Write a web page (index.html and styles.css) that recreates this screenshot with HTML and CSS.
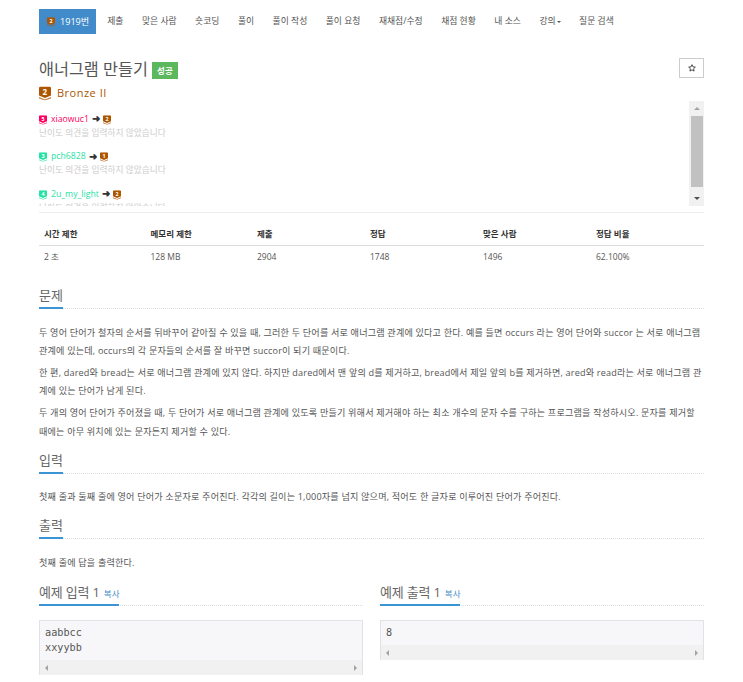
FILE: index.html
```html
<!DOCTYPE html>
<html>

<head>
  <meta charset="utf-8" />
  <title>애너그램 만들기</title>
  <link rel="stylesheet" href="styles.css">
</head>

<body>
  <svg class="defs" width="0" height="0">
    <symbol id="tier" viewBox="0 0 12 14">
      <path d="M1.5 0h9A1.5 1.5 0 0 1 12 1.5V9l-6 2.5L0 9V1.5A1.5 1.5 0 0 1 1.5 0z" fill="currentColor" />
      <path d="M0 10.5l6 2.5 6-2.5V12l-6 2-6-2z" fill="currentColor" opacity=".75" />
    </symbol>
  </svg>

  <div class="wrapper">
    <ul class="menu">
      <li class="active">
        <svg class="tier bronze" viewBox="0 0 12 14"><use href="#tier" /><text x="6" y="8.5">2</text></svg>1919번
      </li>
      <li>제출</li>
      <li>맞은 사람</li>
      <li>숏코딩</li>
      <li>풀이</li>
      <li>풀이 작성</li>
      <li>풀이 요청</li>
      <li>재채점/수정</li>
      <li>채점 현황</li>
      <li>내 소스</li>
      <li>강의<i class="caret"></i></li>
      <li>질문 검색</li>
    </ul>

    <div class="title-row">
      <div>
        <h1>애너그램 만들기 <span class="label">성공</span></h1>
        <div class="rank">
          <svg class="rank-icon bronze" viewBox="0 0 12 14"><use href="#tier" /><text x="6" y="8.5">2</text></svg>Bronze II
        </div>
      </div>
      <button class="star">
        <svg viewBox="0 0 12 12" width="8" height="8"><path d="M6 1l1.5 3.3 3.5.4-2.6 2.4.7 3.5L6 8.8l-3.1 1.8.7-3.500L1 4.700l3.500-.4z" fill="none" stroke="#333" stroke-width="1.300" /></svg>
      </button>
    </div>

    <div class="opinions">
      <div class="opinion-list">
        <div class="opinion">
          <div class="who">
            <svg class="tier ruby" viewBox="0 0 12 14"><use href="#tier" /><text x="6" y="8.5">5</text></svg><span class="ruby">xiaowuc1</span>
            <b class="arrow">➜</b>
            <svg class="tier bronze" viewBox="0 0 12 14"><use href="#tier" /><text x="6" y="8.5">2</text></svg>
          </div>
          <div class="note">난이도 의견을 입력하지 않았습니다</div>
        </div>
        <div class="opinion">
          <div class="who">
            <svg class="tier mint" viewBox="0 0 12 14"><use href="#tier" /><text x="6" y="8.5">3</text></svg><span class="mint">pch6828</span>
            <b class="arrow">➜</b>
            <svg class="tier bronze" viewBox="0 0 12 14"><use href="#tier" /><text x="6" y="8.5">1</text></svg>
          </div>
          <div class="note">난이도 의견을 입력하지 않았습니다</div>
        </div>
        <div class="opinion">
          <div class="who">
            <svg class="tier mint" viewBox="0 0 12 14"><use href="#tier" /><text x="6" y="8.5">4</text></svg><span class="mint">2u_my_light</span>
            <b class="arrow">➜</b>
            <svg class="tier bronze" viewBox="0 0 12 14"><use href="#tier" /><text x="6" y="8.5">2</text></svg>
          </div>
          <div class="note">난이도 의견을 입력하지 않았습니다</div>
        </div>
      </div>
      <div class="vbar">
        <span class="up"></span>
        <span class="thumb"></span>
        <span class="down"></span>
      </div>
    </div>

    <table class="info">
      <thead>
        <tr>
          <th class="c1">시간 제한</th>
          <th class="c1">메모리 제한</th>
          <th class="c2">제출</th>
          <th class="c2">정답</th>
          <th class="c2">맞은 사람</th>
          <th>정답 비율</th>
        </tr>
      </thead>
      <tbody>
        <tr>
          <td>2 초</td>
          <td>128 MB</td>
          <td>2904</td>
          <td>1748</td>
          <td>1496</td>
          <td>62.100%</td>
        </tr>
      </tbody>
    </table>

    <div class="headline"><h2>문제</h2></div>
    <div class="text">
      <p>두 영어 단어가 철자의 순서를 뒤바꾸어 같아질 수 있을 때, 그러한 두 단어를 서로 애너그램 관계에 있다고 한다. 예를 들면 occurs 라는 영어 단어와 succor 는 서로 애너그램 관계에 있는데, occurs의 각 문자들의 순서를 잘 바꾸면 succor이 되기 때문이다.</p>
      <p>한 편, dared와 bread는 서로 애너그램 관계에 있지 않다. 하지만 dared에서 맨 앞의 d를 제거하고, bread에서 제일 앞의 b를 제거하면, ared와 read라는 서로 애너그램 관계에 있는 단어가 남게 된다.</p>
      <p>두 개의 영어 단어가 주어졌을 때, 두 단어가 서로 애너그램 관계에 있도록 만들기 위해서 제거해야 하는 최소 개수의 문자 수를 구하는 프로그램을 작성하시오. 문자를 제거할 때에는 아무 위치에 있는 문자든지 제거할 수 있다.</p>
    </div>

    <div class="headline"><h2>입력</h2></div>
    <div class="text">
      <p>첫째 줄과 둘째 줄에 영어 단어가 소문자로 주어진다. 각각의 길이는 1,000자를 넘지 않으며, 적어도 한 글자로 이루어진 단어가 주어진다.</p>
    </div>

    <div class="headline"><h2>출력</h2></div>
    <div class="text">
      <p>첫째 줄에 답을 출력한다.</p>
    </div>

    <div class="samples">
      <div>
        <div class="headline"><h2>예제 입력 1 <a class="copy">복사</a></h2></div>
        <div class="sample">
          <pre>aabbcc
xxyybb</pre>
          <div class="hbar"><span class="left"></span><span class="right"></span></div>
        </div>
      </div>
      <div>
        <div class="headline"><h2>예제 출력 1 <a class="copy">복사</a></h2></div>
        <div class="sample">
          <pre>8</pre>
          <div class="hbar"><span class="left"></span><span class="right"></span></div>
        </div>
      </div>
    </div>
  </div>
</body>

</html>
```

FILE: styles.css
```css
* {
  box-sizing: border-box;
}

html,
body {
  height: 682px;
  overflow: hidden;
}

body {
  margin: 0;
  background: #fff;
  font: 9.1px/1.5 "Open Sans", "Noto Sans CJK KR", sans-serif;
  color: #555;
}

.defs {
  position: absolute;
}

.wrapper {
  width: 665px;
  margin-left: 39px;
}

.menu {
  display: flex;
  height: 25px;
  margin: 9px 0 0;
  padding: 0;
  list-style: none;
  font-size: 8.8px;
  line-height: 25px;
}
.menu li {
  padding: 0 9.25px;
  white-space: nowrap;
}
.menu li.active {
  display: flex;
  align-items: center;
  width: 57px;
  margin-right: 2px;
  padding: 0 8px;
  background: #428bca;
  color: #fff;
  font-size: 9.1px;
}
.menu .tier {
  margin-right: 5px;
}
.caret {
  display: inline-block;
  margin-left: 1px;
  border-top: 2.5px solid #555;
  border-left: 2.5px solid transparent;
  border-right: 2.5px solid transparent;
  vertical-align: middle;
}

.tier {
  flex: none;
  width: 8px;
  height: 10px;
}
svg text {
  fill: #fff;
  font: 700 8px "Open Sans", sans-serif;
  text-anchor: middle;
}
.bronze {
  color: #ad5600;
}
.ruby {
  color: #ff0062;
}
.mint {
  color: #27e2a4;
}

.title-row {
  display: flex;
  justify-content: space-between;
  align-items: flex-start;
  margin-top: 24px;
}
h1 {
  margin: -1px 0 0;
  font-size: 16.25px;
  font-weight: 400;
  line-height: 24px;
}
.label {
  display: inline-block;
  padding: 0 5px;
  background: #5cb85c;
  color: #fff;
  font-size: 8.5px;
  font-weight: 700;
  line-height: 17px;
  vertical-align: 1px;
}
.rank {
  display: flex;
  align-items: center;
  margin-top: 4px;
  color: #ad5600;
  font-size: 11px;
  letter-spacing: .5px;
  line-height: 16px;
}
.rank-icon {
  width: 12px;
  height: 15px;
  margin-right: 6px;
}
.star {
  display: flex;
  align-items: center;
  justify-content: center;
  width: 25px;
  height: 20px;
  padding: 0;
  background: #fff;
  border: 1px solid #ccc;
}

.opinions {
  display: flex;
  justify-content: space-between;
  height: 112px;
  border-bottom: 1px solid #eee;
  overflow: hidden;
}
.opinion-list {
  height: 105px;
  padding-top: 11.5px;
  overflow: hidden;
  font-size: 8.7px;
}
.opinion {
  height: 37.5px;
}
.who {
  display: flex;
  align-items: center;
  gap: 3px;
  height: 14px;
}
.who .tier + span {
  margin-left: 1px;
}
.arrow {
  color: #333;
  font-size: 9.5px;
}
.note {
  color: #ccc;
  line-height: 13px;
}
.vbar {
  display: flex;
  flex-direction: column;
  width: 15px;
  height: 105px;
  background: #f1f1f1;
  align-items: center;
}
.thumb {
  flex: none;
  width: 12px;
  height: 71px;
  background: #c1c1c1;
}
.up,
.down {
  flex: none;
  width: 6px;
  height: 3px;
  border-left: 3px solid transparent;
  border-right: 3px solid transparent;
}
.up {
  margin: 6px 0;
  border-bottom: 3px solid #a3a3a3;
}
.down {
  margin-top: 10px;
  border-top: 3px solid #505050;
}

.info {
  width: 100%;
  margin: 9px 0 17px;
  border-collapse: collapse;
  table-layout: fixed;
  font-size: 8.5px;
}
.info th {
  padding: 5px;
  border-bottom: 1px solid #ddd;
  color: #333;
  font-weight: 700;
  text-align: left;
  line-height: 13px;
}
.info td {
  padding: 4px 5px 5px;
  line-height: 13px;
}
.info .c1 {
  width: 106.5px;
}
.info .c2 {
  width: 113px;
}

.headline {
  margin-top: 9px;
  border-bottom: 1px dotted #ddd;
}
h2 {
  display: inline-block;
  margin: 0 0 -1px;
  padding-bottom: 2px;
  border-bottom: 2px solid #3b95d4;
  color: #666;
  font-size: 13px;
  font-weight: 400;
  line-height: 20px;
}

.text {
  margin-top: 14.5px;
  letter-spacing: .18px;
  line-height: 18.2px;
}
.text p {
  margin: 0 0 4px;
}

.samples {
  display: grid;
  grid-template-columns: 324px 324px;
  gap: 17px;
}
.samples .headline {
  margin-top: 6px;
}
.samples h2 {
  padding: 0 0 0 0;
  letter-spacing: -.2px;
}
.copy {
  margin-left: 1px;
  color: #428bca;
  font-size: 8.5px;
  letter-spacing: 0;
}

.sample {
  margin-top: 14px;
  background: #f7f7f9;
  border: 1px solid #e1e1e8;
  border-bottom: 0;
}
pre {
  margin: 0;
  padding: 4px 5px 5px;
  font: 10.2px/15px "DejaVu Sans Mono", monospace;
  color: #555;
}
.hbar {
  display: flex;
  justify-content: space-between;
  align-items: center;
  height: 15px;
  padding: 0 5px;
  background: #f1f1f1;
}
.left,
.right {
  width: 0;
  border-top: 3px solid transparent;
  border-bottom: 3px solid transparent;
}
.left {
  border-right: 3px solid #a3a3a3;
}
.right {
  border-left: 3px solid #a3a3a3;
}
```
